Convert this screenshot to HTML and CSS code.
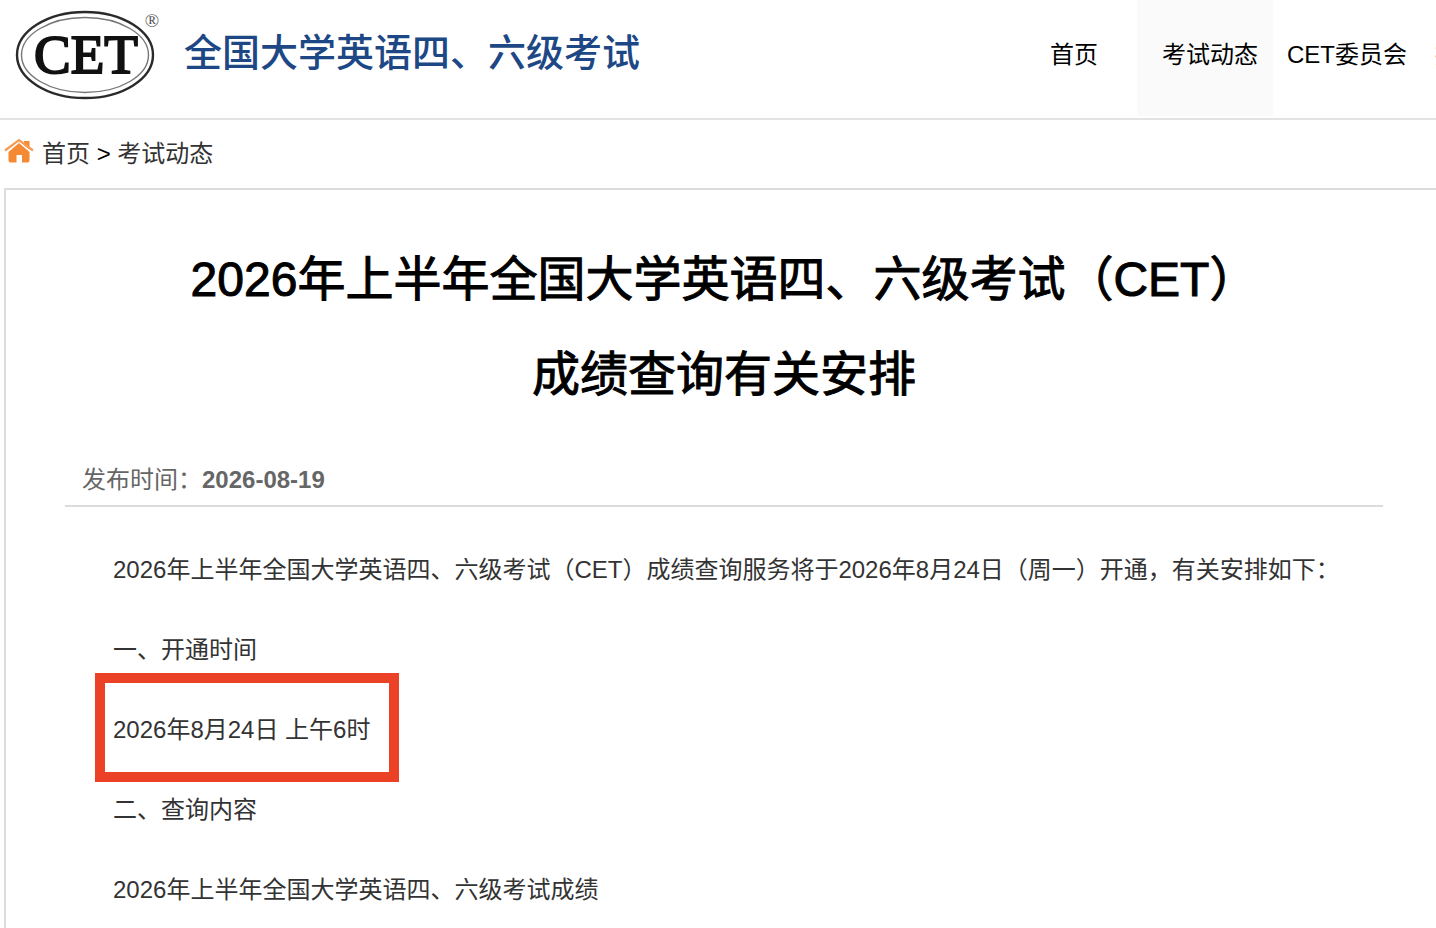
FILE: index.html
```html
<!DOCTYPE html>
<html lang="zh-CN">
<head>
    <meta charset="UTF-8">
    <meta name="viewport" content="width=device-width, initial-scale=1.0">
    <title>全国大学英语四、六级考试</title>
    <link rel="stylesheet" href="styles.css">
</head>
<body>
    <header class="header">
        <a class="brand" href="#">
            <svg class="logo" viewBox="0 0 150 92" role="img" aria-label="CET">
                <ellipse cx="71" cy="47" rx="68" ry="43" fill="#fff" stroke="#2a2a2a" stroke-width="2.4"/>
                <ellipse cx="71" cy="47" rx="63.500" ry="37.500" fill="none" stroke="#777" stroke-width="1.4"/>
                <text class="logo-text" x="72" y="65" text-anchor="middle">CET</text>
                <text class="logo-mark" x="138" y="19" text-anchor="middle">®</text>
            </svg>
            <span class="brand-name">全国大学英语四、六级考试</span>
        </a>
        <nav class="nav">
            <a href="#">首页</a>
            <a class="active" href="#">考试动态</a>
            <a href="#">CET委员会</a>
            <a href="#">报考指南</a>
        </nav>
    </header>

    <div class="breadcrumb">
        <svg class="home" viewBox="0 0 30 26" aria-hidden="true">
            <path d="M4.500 14 L15 5 L25.500 14 V22.500 Q25.500 24.500 23.500 24.500 H18 V17 H12.500 V24.500 H6.500 Q4.500 24.500 4.500 22.500 Z" fill="#f58a35"/>
            <path d="M20 3 H25.500 V12 L20 8 Z" fill="#f58a35"/>
            <path d="M2 14 L15 4 L28 14" fill="none" stroke="#fff" stroke-width="1"/>
            <path d="M1 12.500 L15 2 L29 12.500" fill="none" stroke="#f79a52" stroke-width="2.200"/>
        </svg>
        <div class="trail"><a href="#">首页</a> &gt; <a href="#">考试动态</a></div>
    </div>

    <main class="article">
        <h1>2026年上半年全国大学英语四、六级考试（CET）<br>成绩查询有关安排</h1>
        <div class="meta">发布时间：<strong>2026-08-19</strong></div>
        <div class="content">
            <p>2026年上半年全国大学英语四、六级考试（CET）成绩查询服务将于2026年8月24日（周一）开通，有关安排如下：</p>
            <p>一、开通时间</p>
            <p><span class="marked">2026年8月24日 上午6时</span></p>
            <p>二、查询内容</p>
            <p>2026年上半年全国大学英语四、六级考试成绩</p>
        </div>
    </main>
</body>
</html>
```
FILE: styles.css
```css
body {
    margin: 0;
    overflow-x: hidden;
    background: #fff;
    color: #333;
    font-family: "Liberation Sans", "Noto Sans CJK SC", sans-serif;
    font-size: 24px;
    text-spacing-trim: space-all;
}
a {
    color: inherit;
    text-decoration: none;
}
.header {
    display: flex;
    justify-content: space-between;
    height: 118px;
    border-bottom: 2px solid #e3e3e3;
    overflow: hidden;
}
.brand {
    display: flex;
    align-items: flex-start;
    gap: 20px;
    padding: 8px 0 0 14px;
    white-space: nowrap;
}
.logo {
    width: 150px;
    height: 92px;
}
.logo-text {
    font-family: "Liberation Serif", serif;
    font-size: 55px;
    fill: #111;
    stroke: #111;
    stroke-width: 2px;
}
.logo-mark {
    font-family: "Liberation Serif", serif;
    font-size: 19px;
    fill: #555;
}
.brand-name {
    font-size: 38px;
    font-weight: 500;
    line-height: 90px;
    color: #1d4885;
}
.nav {
    display: flex;
    height: 116px;
    margin-right: -109px;
    line-height: 110px;
    color: #000;
    white-space: nowrap;
}
.nav a {
    padding: 0 14px;
}
.nav a:first-child {
    padding-right: 39px;
}
.nav .active {
    padding: 0 15px 0 25px;
    background: #fafafa;
}
.breadcrumb {
    display: flex;
    align-items: center;
    gap: 8px;
    height: 62px;
    padding: 0 0 6px 4px;
}
.trail {
    color: #000;
}
.trail a {
    color: #333;
}
.home {
    width: 30px;
    height: 26px;
}
.article {
    margin-left: 4px;
    padding: 42px 53px 0 59px;
    border: 2px solid #dcdcdc;
    border-width: 2px 0 0 2px;
}
h1 {
    margin: 0;
    color: #000;
    font-size: 48px;
    font-weight: normal;
    line-height: 95px;
    text-align: center;
    -webkit-text-stroke: 1px #000;
}
.meta {
    margin-top: 32px;
    padding: 0 17px;
    border-bottom: 2px solid #dcdcdc;
    color: #666;
    line-height: 51px;
}
.content {
    padding: 23px 0 0 48px;
}
.content p {
    margin: 0;
    line-height: 80px;
}
.marked {
    position: relative;
}
/* red frame round the opening time */
.marked::before {
    content: "";
    position: absolute;
    inset: -43px -29px -39px -18px;
    border: 10px solid #ea4127;
}
```
